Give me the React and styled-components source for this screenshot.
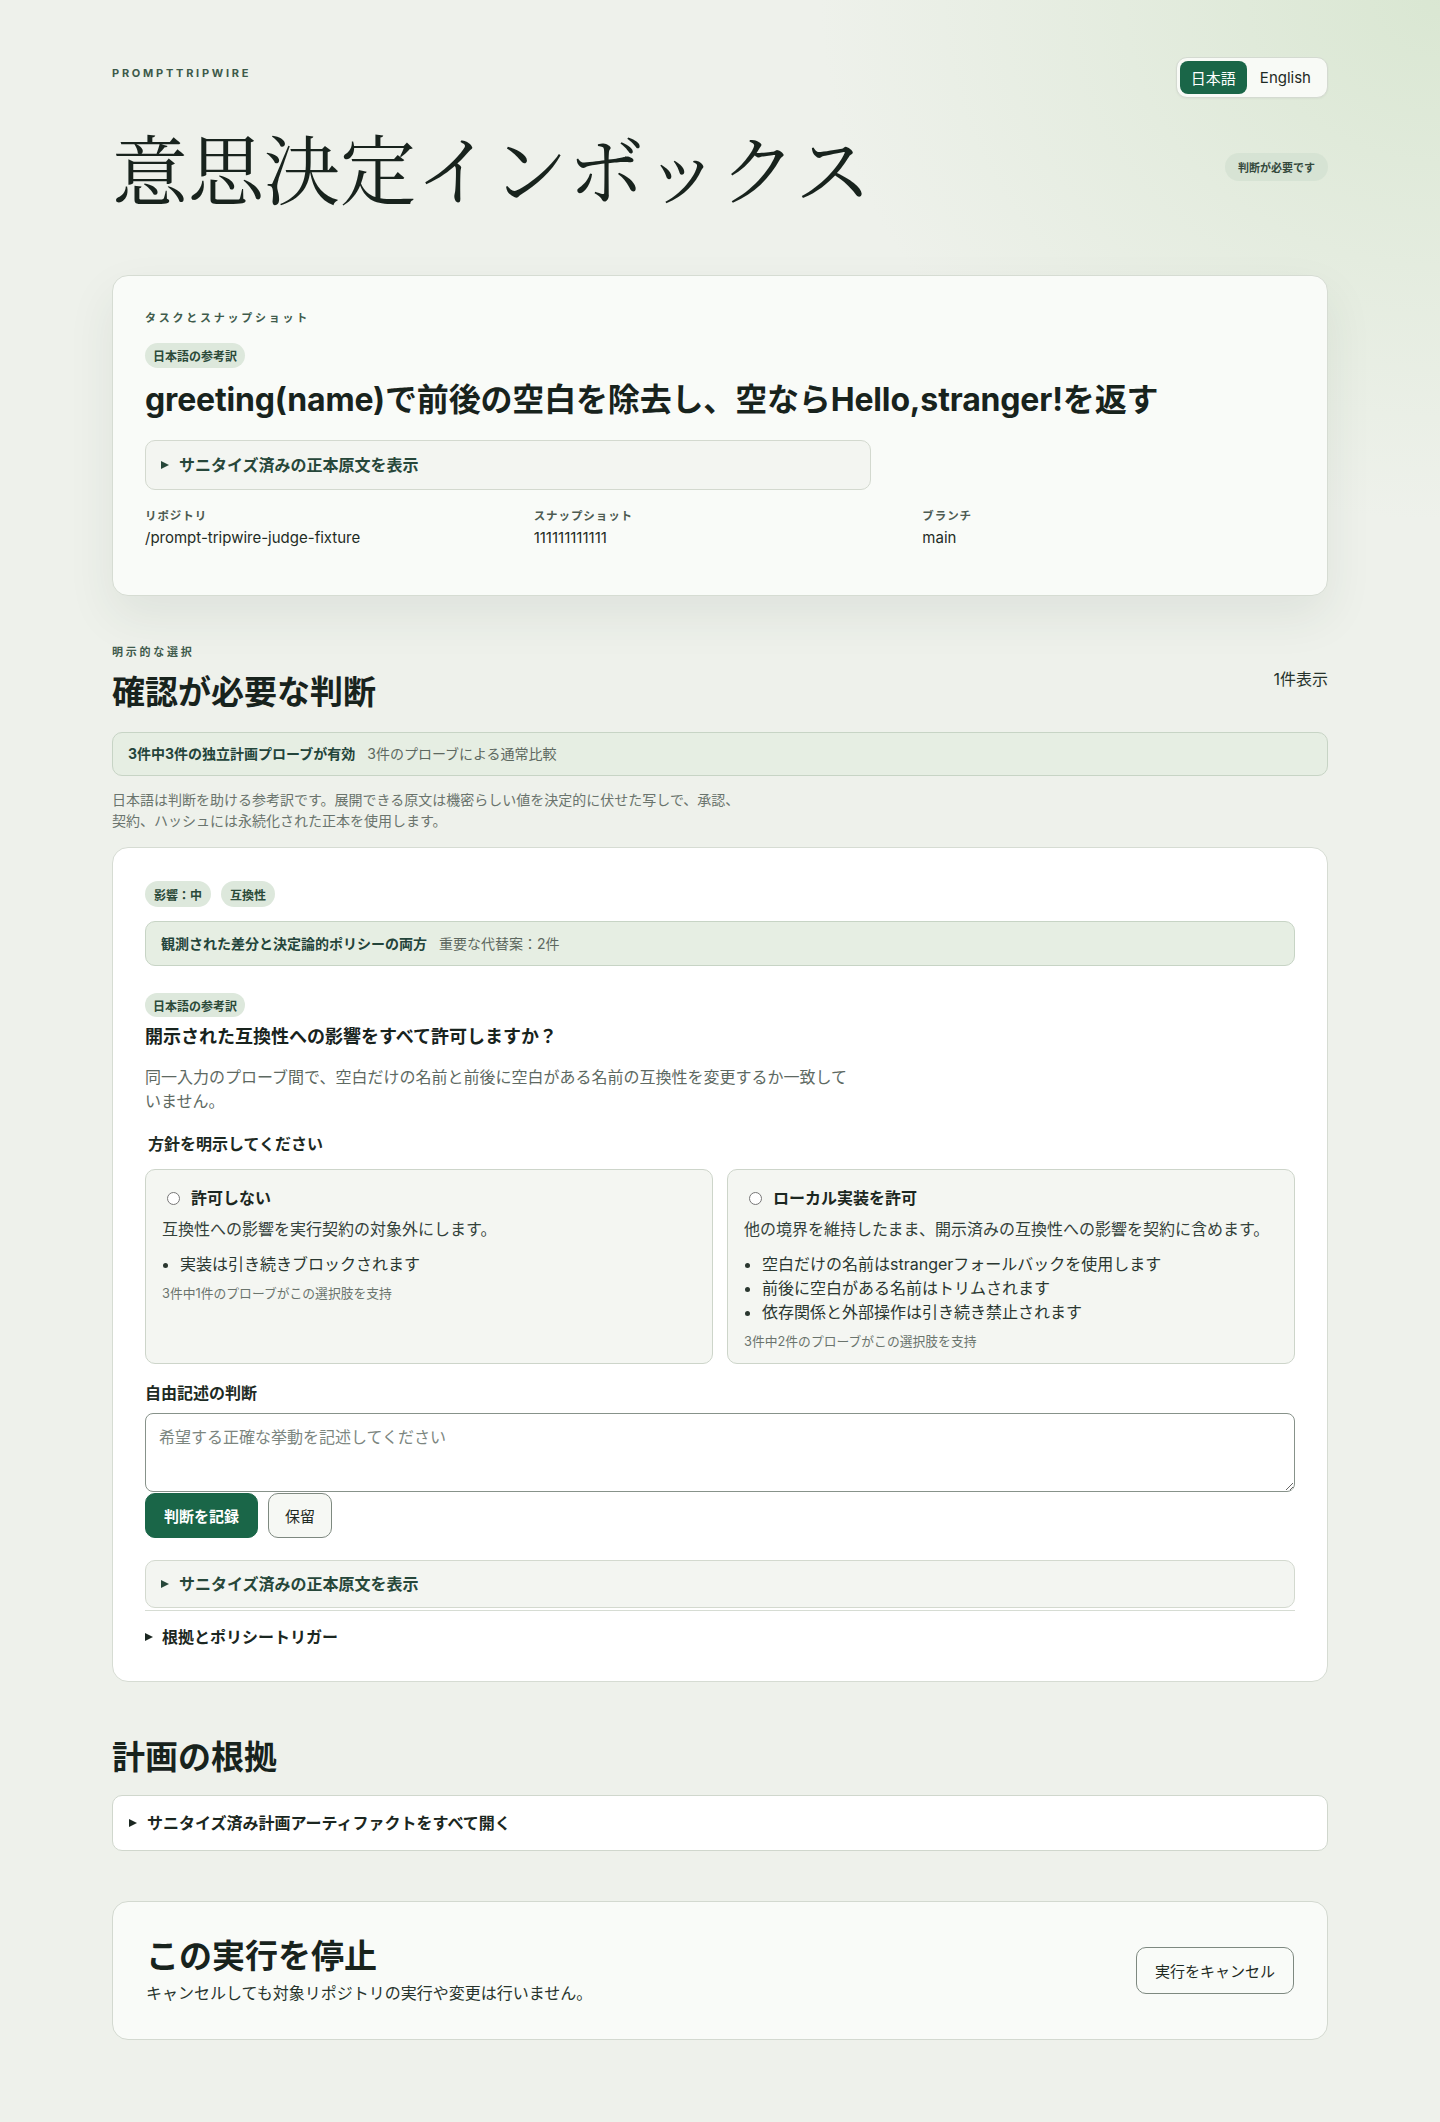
import React, { useState } from 'react';
import styled, { createGlobalStyle } from 'styled-components';

const GlobalStyle = createGlobalStyle`
  * { box-sizing: border-box; }
  html, body { margin: 0; padding: 0; }
  body {
    font-family: Inter, "Noto Sans CJK JP", sans-serif;
    color: #1b2721;
    background: #eef1eb;
    -webkit-font-smoothing: antialiased;
  }
`;

const Page = styled.div`
  min-height: 100vh;
  background:
    radial-gradient(ellipse 620px 520px at 100% 0%, rgba(214, 229, 206, 0.85), rgba(214, 229, 206, 0) 100%),
    #eef1eb;
`;

const Shell = styled.main`
  max-width: 1216px;
  margin: 0 auto;
  padding: 57px 0 81px;
`;

const TopBar = styled.header`
  display: flex;
  justify-content: space-between;
  align-items: flex-start;
`;

const Brand = styled.div`
  padding-top: 10px;
  font-size: 11px;
  line-height: 13px;
  font-weight: 700;
  letter-spacing: 0.25em;
  text-transform: uppercase;
  color: #3d5a4a;
`;

const LangToggle = styled.div`
  display: flex;
  padding: 3px;
  background: #f8faf6;
  border: 1px solid #d4dad1;
  border-radius: 11px;
  box-shadow: 0 1px 2px rgba(30, 50, 35, 0.05);
`;

const LangButton = styled.button`
  height: 33px;
  padding: 0 ${p => (p.$active ? '11px' : '13px')};
  border: 0;
  border-radius: 8px;
  font-family: inherit;
  font-size: 15px;
  background: ${p => (p.$active ? '#1a6648' : 'transparent')};
  color: ${p => (p.$active ? '#ffffff' : '#1e2a23')};
  cursor: pointer;
`;

const Hero = styled.div`
  display: flex;
  justify-content: space-between;
  align-items: center;
  margin: 27px 0 66px;
`;

const Title = styled.h1`
  margin: 0;
  font-family: "Noto Serif CJK JP", "Noto Sans CJK JP", serif;
  font-size: 76px;
  line-height: 84px;
  font-weight: 400;
  color: #18231d;
`;

const StatusBadge = styled.span`
  display: inline-flex;
  align-items: center;
  height: 28px;
  padding: 0 13px;
  border-radius: 999px;
  background: rgba(210, 224, 208, 0.7);
  color: #34493c;
  font-size: 11px;
  font-weight: 700;
`;

const TaskCard = styled.section`
  display: flex;
  flex-direction: column;
  padding: 36px 32px 47px;
  background: #f9fbf8;
  border: 1px solid #d6dcd3;
  border-radius: 16px;
  box-shadow: 0 20px 48px rgba(40, 60, 45, 0.08);
`;

const Eyebrow = styled.div`
  font-size: 11px;
  line-height: 13px;
  font-weight: 700;
  letter-spacing: 0.25em;
  color: #3f5b4c;
`;

const Chip = styled.span`
  align-self: flex-start;
  display: inline-flex;
  align-items: center;
  height: ${p => p.$h || 25}px;
  margin-top: ${p => p.$mt || 0}px;
  padding: 0 ${p => p.$px || 8}px;
  border-radius: 999px;
  background: #dde8dc;
  color: #2b4a39;
  font-size: 12px;
  font-weight: 700;
`;

const TaskTitle = styled.h2`
  margin: 12px 0 0;
  font-size: 32px;
  line-height: 40px;
  font-weight: 700;
  letter-spacing: -0.005em;
  color: #18231d;
`;

const Disclosure = styled.details`
  margin-top: ${p => p.$mt || 0}px;
  max-width: ${p => (p.$narrow ? '726px' : 'none')};
  background: ${p => p.$bg || '#f3f5f1'};
  border: 1px solid ${p => p.$border || '#d3d9cf'};
  border-radius: 10px;
`;

const Summary = styled.summary`
  display: flex;
  align-items: center;
  padding: ${p => p.$pad || '13px 15px'};
  list-style: none;
  font-size: 16px;
  line-height: 22px;
  font-weight: 700;
  color: ${p => p.$color || '#27473a'};
  cursor: pointer;

  &::-webkit-details-marker { display: none; }
  &::before {
    content: '';
    width: 0;
    height: 0;
    margin-right: ${p => p.$gap || 10}px;
    border-left: 8px solid currentColor;
    border-top: 4.5px solid transparent;
    border-bottom: 4.5px solid transparent;
  }
`;

const MetaGrid = styled.dl`
  display: grid;
  grid-template-columns: repeat(3, 1fr);
  gap: 16px;
  margin: 19px 0 0;
`;

const MetaItem = styled.div``;

const MetaLabel = styled.dt`
  font-size: 11.5px;
  line-height: 14px;
  font-weight: 700;
  letter-spacing: 0.08em;
  color: #4d5b52;
`;

const MetaValue = styled.dd`
  margin: 5px 0 0;
  font-size: 15px;
  line-height: 20px;
  color: #1e2b24;
`;

const Section = styled.section`
  margin-top: ${p => p.$mt || 0}px;
`;

const SectionHead = styled.div`
  display: flex;
  justify-content: space-between;
  align-items: center;
`;

const SectionTitle = styled.h2`
  margin: ${p => p.$mt || 0}px 0 0;
  font-size: 33px;
  line-height: 40px;
  font-weight: 700;
  color: #18231d;
`;

const Count = styled.span`
  font-size: 16px;
  line-height: 20px;
  color: #26332b;
`;

const InfoBar = styled.div`
  display: flex;
  align-items: center;
  gap: 12px;
  margin-top: ${p => p.$mt || 0}px;
  padding: ${p => p.$pad || '11px 15px'};
  background: #e6eee3;
  border: 1px solid #c7d4c5;
  border-radius: 10px;
  font-size: 14px;
  line-height: 20px;
`;

const InfoStrong = styled.strong`
  color: #23443a;
`;

const InfoMuted = styled.span`
  color: #5d6860;
`;

const Note = styled.p`
  max-width: 640px;
  margin: 13px 0 0;
  font-size: 14px;
  line-height: 21px;
  color: #6a746d;
`;

const DecisionCard = styled.article`
  display: flex;
  flex-direction: column;
  margin-top: 16px;
  padding: 33px 32px;
  background: #ffffff;
  border: 1px solid #d6dcd3;
  border-radius: 16px;
`;

const ChipRow = styled.div`
  display: flex;
  gap: 10px;
`;

const Question = styled.h3`
  margin: 8px 0 0;
  font-size: 18px;
  line-height: 24px;
  font-weight: 700;
  color: #18231d;
`;

const Description = styled.p`
  max-width: 704px;
  margin: 16px 0 0;
  font-size: 16px;
  line-height: 24px;
  color: #5d6962;
`;

const Fieldset = styled.fieldset`
  min-width: 0;
  margin: 20px 0 0;
  padding: 0;
  border: 0;
`;

const Legend = styled.legend`
  padding: 0 3px;
  font-size: 16px;
  line-height: 22px;
  font-weight: 700;
  color: #1d2a23;
`;

const OptionGrid = styled.div`
  display: grid;
  grid-template-columns: 1fr 1fr;
  gap: 14px;
  margin-top: 14px;
`;

const OptionCard = styled.label`
  display: flex;
  flex-direction: column;
  gap: 8px;
  padding: 17px 16px 12px;
  background: #f4f6f2;
  border: 1px solid ${p => (p.$checked ? '#1a6648' : '#cdd5ca')};
  border-radius: 10px;
  cursor: pointer;
`;

const OptionTitle = styled.span`
  display: flex;
  align-items: center;
  gap: 8px;
  font-size: 16px;
  line-height: 22px;
  font-weight: 700;
  color: #1b2721;

  input { margin: 0 3px 0 5px; }
`;

const OptionDesc = styled.span`
  font-size: 16px;
  line-height: 24px;
  color: #33413a;
`;

const BulletList = styled.ul`
  margin: 3px 0 0;
  padding-left: 18px;
  font-size: 16px;
  line-height: 24px;
  color: #2a3730;
`;

const Support = styled.span`
  font-size: 12.8px;
  line-height: 19px;
  color: #6a746d;
`;

const FieldLabel = styled.label`
  margin-top: 18px;
  font-size: 16px;
  line-height: 22px;
  font-weight: 700;
  color: #1d2a23;
`;

const TextArea = styled.textarea`
  display: block;
  width: 100%;
  height: 79px;
  margin-top: 9px;
  padding: 12px 13px;
  border: 1px solid #87928a;
  border-radius: 8px;
  background: #ffffff;
  font-family: inherit;
  font-size: 16px;
  line-height: 22px;
  color: #1b2721;
  resize: vertical;

  &::placeholder { color: #7c867f; }
`;

const ButtonRow = styled.div`
  display: flex;
  gap: 10px;
  margin-top: 1px;
`;

const Button = styled.button`
  height: ${p => p.$h || 45}px;
  padding: 0 ${p => p.$px || 16}px;
  border: 1px solid ${p => (p.$primary ? '#1a6648' : '#7e8980')};
  border-radius: 10px;
  background: ${p => (p.$primary ? '#1a6648' : p.$bg || '#f6f8f4')};
  color: ${p => (p.$primary ? '#ffffff' : '#1e2a23')};
  font-family: inherit;
  font-size: 15px;
  font-weight: ${p => (p.$primary ? 700 : 400)};
  cursor: pointer;
`;

const Rationale = styled.details`
  margin-top: 2px;
  padding-top: 15px;
  border-top: 1px solid #d6dcd3;
`;

const CancelCard = styled.section`
  display: flex;
  justify-content: space-between;
  align-items: center;
  margin-top: 50px;
  padding: 34px 33px;
  background: #f9fbf8;
  border: 1px solid #d3d9d0;
  border-radius: 16px;
`;

const CancelText = styled.p`
  margin: 5px 0 0;
  font-size: 16px;
  line-height: 24px;
  color: #27342c;
`;

const options = [
  {
    id: 'deny',
    title: '許可しない',
    desc: '互換性への影響を実行契約の対象外にします。',
    bullets: ['実装は引き続きブロックされます'],
    support: '3件中1件のプローブがこの選択肢を支持',
  },
  {
    id: 'local',
    title: 'ローカル実装を許可',
    desc: '他の境界を維持したまま、開示済みの互換性への影響を契約に含めます。',
    bullets: [
      '空白だけの名前はstrangerフォールバックを使用します',
      '前後に空白がある名前はトリムされます',
      '依存関係と外部操作は引き続き禁止されます',
    ],
    support: '3件中2件のプローブがこの選択肢を支持',
  },
];

const App = () => {
  const [lang, setLang] = useState('ja');
  const [choice, setChoice] = useState('');
  const [note, setNote] = useState('');

  return (
    <Page>
      <GlobalStyle />
      <Shell>
        <TopBar>
          <Brand>PromptTripwire</Brand>
          <LangToggle>
            <LangButton $active={lang === 'ja'} onClick={() => setLang('ja')}>日本語</LangButton>
            <LangButton $active={lang === 'en'} onClick={() => setLang('en')}>English</LangButton>
          </LangToggle>
        </TopBar>

        <Hero>
          <Title>意思決定インボックス</Title>
          <StatusBadge>判断が必要です</StatusBadge>
        </Hero>

        <TaskCard>
          <Eyebrow>タスクとスナップショット</Eyebrow>
          <Chip $mt={18}>日本語の参考訳</Chip>
          <TaskTitle>greeting(name)で前後の空白を除去し、空ならHello,stranger!を返す</TaskTitle>
          <Disclosure $mt={20} $narrow>
            <Summary>サニタイズ済みの正本原文を表示</Summary>
          </Disclosure>
          <MetaGrid>
            <MetaItem>
              <MetaLabel>リポジトリ</MetaLabel>
              <MetaValue>/prompt-tripwire-judge-fixture</MetaValue>
            </MetaItem>
            <MetaItem>
              <MetaLabel>スナップショット</MetaLabel>
              <MetaValue>111111111111</MetaValue>
            </MetaItem>
            <MetaItem>
              <MetaLabel>ブランチ</MetaLabel>
              <MetaValue>main</MetaValue>
            </MetaItem>
          </MetaGrid>
        </TaskCard>

        <Section $mt={50}>
          <SectionHead>
            <div>
              <Eyebrow>明示的な選択</Eyebrow>
              <SectionTitle $mt={13}>確認が必要な判断</SectionTitle>
            </div>
            <Count>1件表示</Count>
          </SectionHead>
          <InfoBar $mt={20}>
            <InfoStrong>3件中3件の独立計画プローブが有効</InfoStrong>
            <InfoMuted>3件のプローブによる通常比較</InfoMuted>
          </InfoBar>
          <Note>
            日本語は判断を助ける参考訳です。展開できる原文は機密らしい値を決定的に伏せた写しで、承認、契約、ハッシュには永続化された正本を使用します。
          </Note>

          <DecisionCard>
            <ChipRow>
              <Chip $h={26} $px={9}>影響：中</Chip>
              <Chip $h={26} $px={9}>互換性</Chip>
            </ChipRow>
            <InfoBar $mt={14} $pad="11.5px 15px">
              <InfoStrong>観測された差分と決定論的ポリシーの両方</InfoStrong>
              <InfoMuted>重要な代替案：2件</InfoMuted>
            </InfoBar>
            <Chip $mt={27} $h={24}>日本語の参考訳</Chip>
            <Question>開示された互換性への影響をすべて許可しますか？</Question>
            <Description>
              同一入力のプローブ間で、空白だけの名前と前後に空白がある名前の互換性を変更するか一致していません。
            </Description>

            <Fieldset>
              <Legend>方針を明示してください</Legend>
              <OptionGrid>
                {options.map(opt => (
                  <OptionCard key={opt.id} $checked={choice === opt.id}>
                    <OptionTitle>
                      <input
                        type="radio"
                        name="policy"
                        value={opt.id}
                        checked={choice === opt.id}
                        onChange={() => setChoice(opt.id)}
                      />
                      {opt.title}
                    </OptionTitle>
                    <OptionDesc>{opt.desc}</OptionDesc>
                    <BulletList>
                      {opt.bullets.map(b => <li key={b}>{b}</li>)}
                    </BulletList>
                    <Support>{opt.support}</Support>
                  </OptionCard>
                ))}
              </OptionGrid>
            </Fieldset>

            <FieldLabel htmlFor="free-judgement">自由記述の判断</FieldLabel>
            <TextArea
              id="free-judgement"
              placeholder="希望する正確な挙動を記述してください"
              value={note}
              onChange={e => setNote(e.target.value)}
            />
            <ButtonRow>
              <Button $primary $px={18}>判断を記録</Button>
              <Button>保留</Button>
            </ButtonRow>

            <Disclosure $mt={22}>
              <Summary $pad="12px 15px">サニタイズ済みの正本原文を表示</Summary>
            </Disclosure>
            <Rationale>
              <Summary $pad="0" $gap={9} $color="#1b2721">根拠とポリシートリガー</Summary>
            </Rationale>
          </DecisionCard>
        </Section>

        <Section $mt={55}>
          <SectionTitle>計画の根拠</SectionTitle>
          <Disclosure $mt={18} $bg="#ffffff" $border="#d0d7cd">
            <Summary $pad="16px" $color="#1b2721">サニタイズ済み計画アーティファクトをすべて開く</Summary>
          </Disclosure>
        </Section>

        <CancelCard>
          <div>
            <SectionTitle>この実行を停止</SectionTitle>
            <CancelText>キャンセルしても対象リポジトリの実行や変更は行いません。</CancelText>
          </div>
          <Button $h={47} $px={18} $bg="transparent">実行をキャンセル</Button>
        </CancelCard>
      </Shell>
    </Page>
  );
};

export default App;
